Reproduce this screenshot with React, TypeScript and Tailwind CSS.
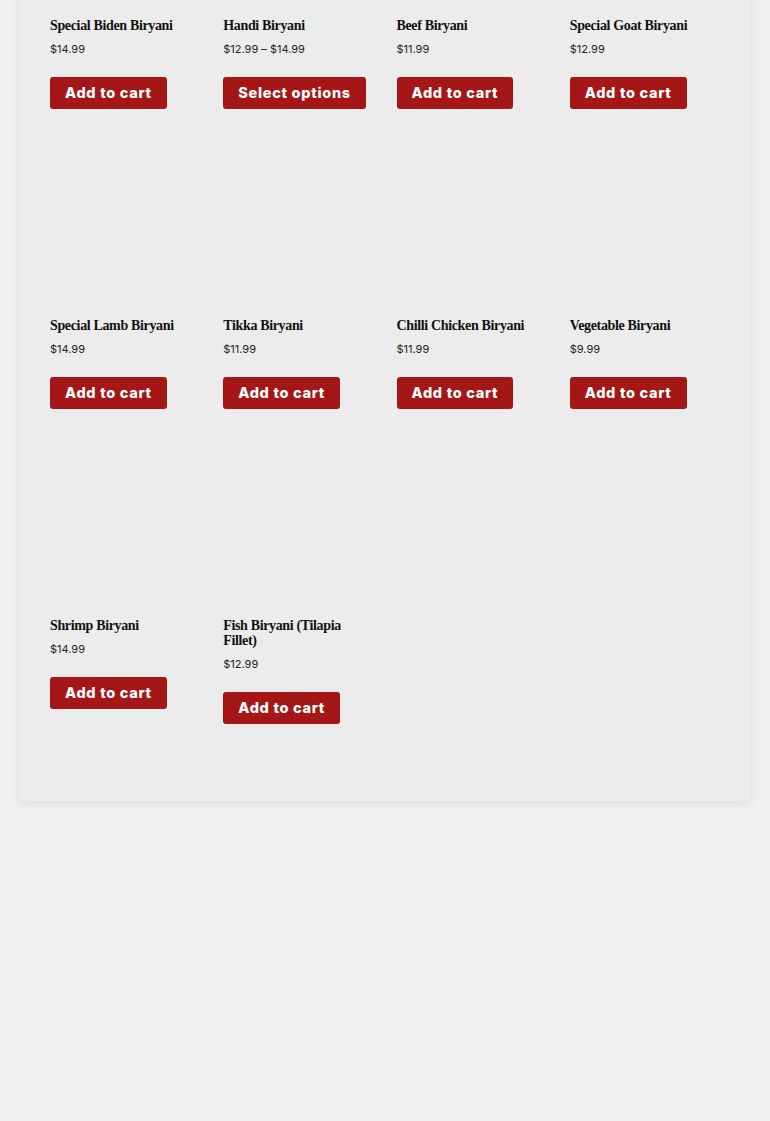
import React from 'react'

type Product = { name: string; price: string; action?: string }

const products: Product[] = [
    { name: 'Special Biden Biryani', price: '$14.99' },
    { name: 'Handi Biryani', price: '$12.99 – $14.99', action: 'Select options' },
    { name: 'Beef Biryani', price: '$11.99' },
    { name: 'Special Goat Biryani', price: '$12.99' },
    { name: 'Special Lamb Biryani', price: '$14.99' },
    { name: 'Tikka Biryani', price: '$11.99' },
    { name: 'Chilli Chicken Biryani', price: '$11.99' },
    { name: 'Vegetable Biryani', price: '$9.99' },
    { name: 'Shrimp Biryani', price: '$14.99' },
    { name: 'Fish Biryani (Tilapia Fillet)', price: '$12.99' },
]

const ProductCard = ({ p }: { p: Product }) => {
    return (
        <div className='flex flex-col items-start mb-[46.5px]'>
            {/* image area, empty in the shot */}
            <div className='w-full h-[150px]' />
            <h2 className="mt-[12px] text-[14px] leading-[15px] font-bold tracking-[-0.35px] text-[#111] font-['Liberation_Serif',serif]">
                {p.name}
            </h2>
            <p className="mt-[8.5px] text-[11px] leading-[16px] text-[#222] font-['Inter',sans-serif]">{p.price}</p>
            <button className="mt-[20px] h-[32px] px-[15px] rounded-[3px] bg-[#a51616] text-white text-[14.5px] font-extrabold tracking-[0.7px] font-['Inter',sans-serif]">
                {p.action ?? 'Add to cart'}
            </button>
        </div>
    )
}

const App = () => {
    return (
        <div className='min-h-[1121px] bg-[#efefef] px-[20px] overflow-hidden'>
            <div className='mt-[-174.5px] bg-[#ececec] px-[30px] pt-[30px] pb-[30.5px] shadow-[0_2px_10px_rgba(0,0,0,0.08)]'>
                <div className='grid grid-cols-4 gap-x-[23px]'>
                    {products.map((p) => (
                        <ProductCard key={p.name} p={p} />
                    ))}
                </div>
            </div>
        </div>
    )
}

export default App
